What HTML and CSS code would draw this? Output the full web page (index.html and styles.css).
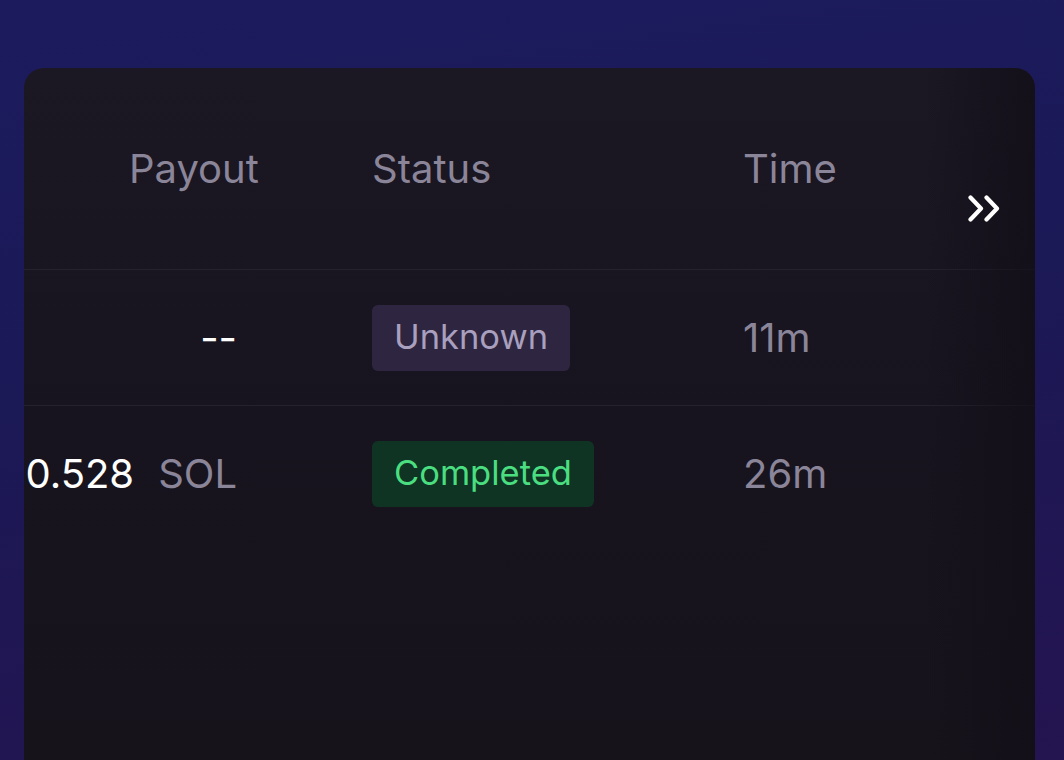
FILE: index.html
```html
<!DOCTYPE html>
<html lang="en">
<head>
<meta charset="utf-8">
<title>Payouts</title>
<link rel="stylesheet" href="styles.css">
</head>
<body>
  <div class="card">
    <div class="table">
      <div class="row head">
        <div class="cell payout-h">Payout</div>
        <div class="cell status">Status</div>
        <div class="cell time">Time</div>
      </div>
      <div class="row">
        <div class="cell payout"><span class="amount">--</span></div>
        <div class="cell status"><span class="badge unknown">Unknown</span></div>
        <div class="cell time">11m</div>
      </div>
      <div class="row">
        <div class="cell payout"><span class="amount">0.528</span><span class="unit">SOL</span></div>
        <div class="cell status"><span class="badge completed">Completed</span></div>
        <div class="cell time">26m</div>
      </div>
    </div>
    <div class="fade"></div>
    <button class="more" aria-label="Scroll right">
      <svg width="34" height="27" viewBox="0 0 34 27" fill="none" stroke="#ffffff" stroke-width="4.2" stroke-linecap="round" stroke-linejoin="round">
        <polyline points="2.5,2.5 13,13.5 2.5,24.5"/>
        <polyline points="18.5,2.5 29,13.5 18.5,24.5"/>
      </svg>
    </button>
  </div>
</body>
</html>
```

FILE: styles.css
```css
html, body {
  margin: 0;
  padding: 0;
  height: 100%;
  overflow: hidden;
}

body {
  background: linear-gradient(172deg, #1c1b5e 0%, #1b1956 45%, #241450 100%);
  font-family: Inter, "Noto Sans", sans-serif;
}

.card {
  position: relative;
  margin: 68px 0 0 24px;
  width: 1011px;
  height: 692px;
  border-radius: 20px 20px 0 0;
  overflow: hidden;
  background: linear-gradient(180deg, #1b1723 0%, #18141f 50%, #16131b 100%);
}

.table {
  display: flex;
  flex-direction: column;
}

.row {
  display: grid;
  grid-template-columns: 348px 371px 1fr;
  height: 135px;
  align-items: center;
  border-bottom: 1px solid #26212f;
}

.row:last-child {
  border-bottom: 0;
}

.row.head {
  height: 201px;
}

.cell {
  font-size: 40px;
  line-height: 1;
  color: #8b8599;
  white-space: nowrap;
}

.payout-h {
  padding-left: 105px;
}

.payout {
  display: flex;
  justify-content: flex-end;
  align-items: baseline;
  gap: 24px;
  padding-right: 135px;
}

.amount {
  color: #ffffff;
}

.unit {
  color: #8b8599;
}

.badge {
  display: inline-flex;
  align-items: center;
  height: 66px;
  padding: 0 22px;
  border-radius: 6px;
  font-size: 34.5px;
  font-weight: 400;
  box-sizing: border-box;
}

.badge.unknown {
  background: #2e2640;
  color: #a99fbe;
}

.badge.completed {
  background: #0f3424;
  color: #4ade80;
}

.fade {
  position: absolute;
  top: 0;
  right: 0;
  width: 110px;
  height: 100%;
  background: linear-gradient(90deg, rgba(18, 14, 23, 0) 0%, rgba(18, 14, 23, 0.75) 100%);
  pointer-events: none;
}

.more {
  position: absolute;
  left: 944px;
  top: 127px;
  padding: 0;
  border: 0;
  background: none;
  display: flex;
}
```
